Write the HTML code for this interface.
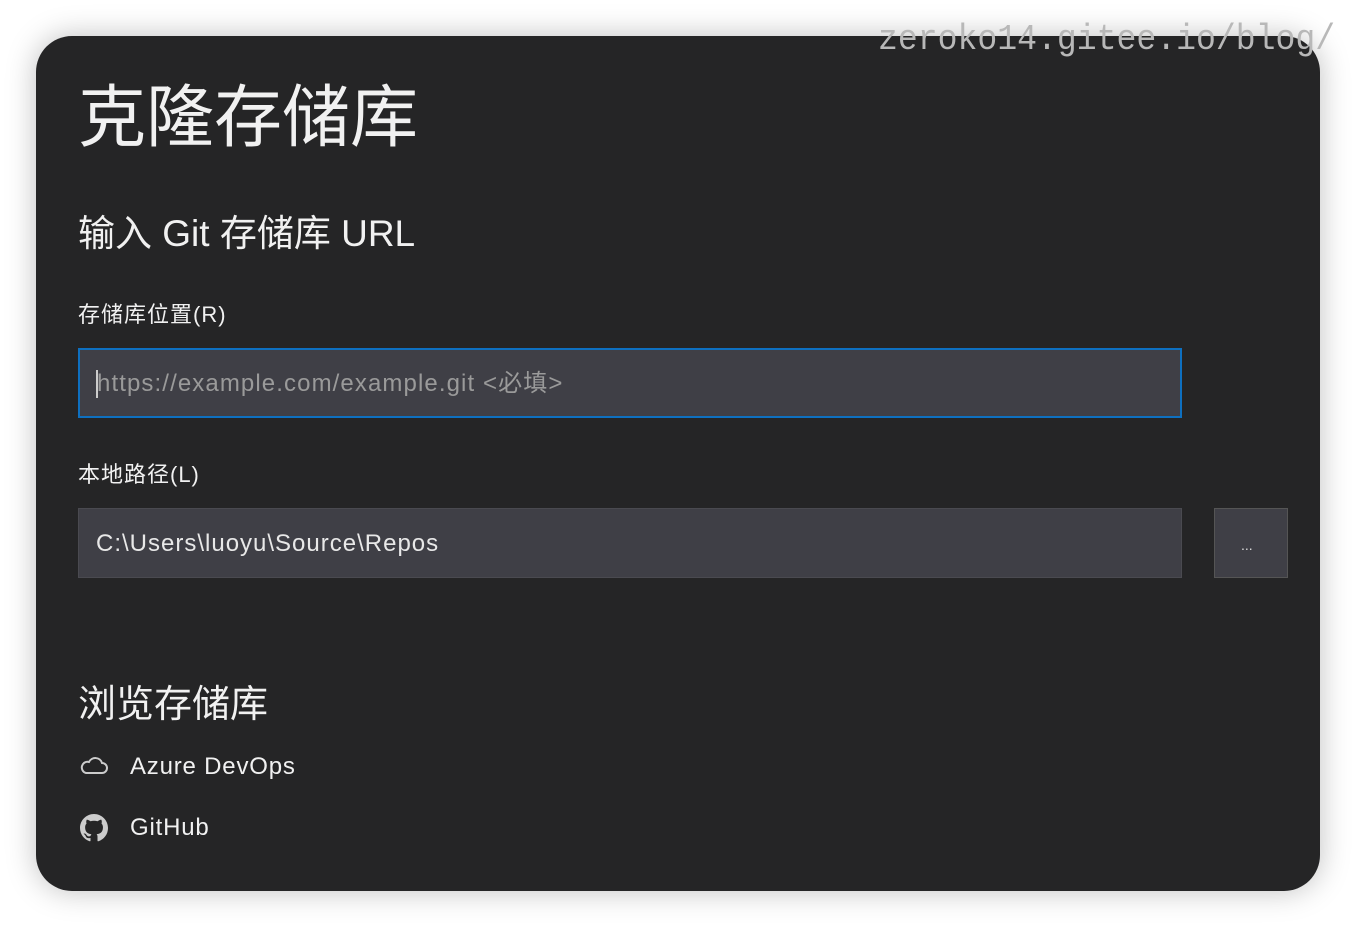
<!DOCTYPE html>
<html><head><meta charset="utf-8"><style>
html,body{margin:0;padding:0;width:1356px;height:928px;background:#fff;overflow:hidden;font-family:"Liberation Sans","Noto Sans CJK SC",sans-serif;}
.card{position:absolute;left:36px;top:36px;width:1284px;height:855px;background:#252526;border-radius:36px;box-shadow:0 0 30px rgba(0,0,0,0.25);}
.t{position:absolute;color:#f1f1f1;white-space:nowrap;line-height:1;}
.inp{position:absolute;left:78px;width:1100px;height:65px;background:#3f3f46;box-sizing:border-box;}
.wm{position:absolute;left:878px;top:22px;font-family:"Liberation Mono",monospace;font-size:36px;color:#b8b8b8;white-space:nowrap;transform:scaleX(0.92);transform-origin:left top;line-height:1;}
</style></head><body>
<div class="card"></div>
<div class="t" style="left:78px;top:84px;font-size:68px;">克隆存储库</div>
<div class="t" style="left:78px;top:215px;font-size:37px;">输入 Git 存储库 URL</div>
<div class="t" style="left:78px;top:304px;font-size:22px;letter-spacing:1px;">存储库位置(R)</div>
<div class="inp" style="top:348px;border:2px solid #0e70c0;width:1104px;height:70px;"></div>
<div style="position:absolute;left:96px;top:370px;width:2px;height:28px;background:#ccc"></div>
<div class="t" style="left:97px;top:372px;font-size:24px;color:#9a9a9a;letter-spacing:1.1px;">https://example.com/example.git &lt;必填&gt;</div>
<div class="t" style="left:78px;top:464px;font-size:22px;letter-spacing:1px;">本地路径(L)</div>
<div class="inp" style="top:508px;border:1px solid #4a4a50;width:1104px;height:70px;"></div>
<div class="t" style="left:96px;top:532px;font-size:24px;color:#e8e8e8;letter-spacing:1px;">C:\Users\luoyu\Source\Repos</div>
<div style="position:absolute;left:1214px;top:508px;width:74px;height:70px;box-sizing:border-box;background:#3f3f46;border:1px solid #555;"></div>
<div class="t" style="left:1241px;top:538px;font-size:14px;color:#ddd;">...</div>
<div class="t" style="left:78px;top:686px;font-size:38px;">浏览存储库</div>
<svg style="position:absolute;left:79px;top:756px" width="30" height="20" viewBox="0 0 30 20"><path d="M7 17 H23 A5 5 0 0 0 23 7 A7 7 0 0 0 10 6 A5.5 5.5 0 0 0 7 17 Z" fill="none" stroke="#ccc" stroke-width="2"/></svg>
<div class="t" style="left:130px;top:755px;font-size:24px;letter-spacing:0.8px;">Azure DevOps</div>
<svg style="position:absolute;left:80px;top:814px" width="28" height="28" viewBox="0 0 16 16"><path fill="#ccc" d="M8 0C3.58 0 0 3.580 0 8c0 3.54 2.29 6.53 5.470 7.59.4.07.55-.17.55-.38 0-.19-.01-.82-.01-1.49-2.01.37-2.530-.49-2.690-.94-.09-.23-.48-.94-.82-1.13-.28-.15-.68-.52-.01-.53.63-.01 1.08.58 1.23.82.72 1.21 1.87.87 2.33.66.07-.52.28-.87.51-1.07-1.78-.2-3.64-.89-3.64-3.950 0-.87.31-1.59.82-2.15-.08-.2-.36-1.02.08-2.12 0 0 .67-.21 2.2.82.64-.18 1.32-.27 2-.27.68 0 1.36.09 2 .27 1.53-1.04 2.2-.82 2.2-.82.44 1.1.16 1.92.08 2.12.51.56.82 1.27.82 2.15 0 3.07-1.87 3.75-3.65 3.95.29.25.54.73.54 1.48 0 1.07-.01 1.93-.01 2.2 0 .21.15.46.55.38A8.013 8.013 0 0016 8c0-4.42-3.58-8-8-8z"/></svg>
<div class="t" style="left:130px;top:816px;font-size:24px;letter-spacing:0.8px;">GitHub</div>
<div class="wm">zeroko14.gitee.io/blog/</div>
</body></html>
